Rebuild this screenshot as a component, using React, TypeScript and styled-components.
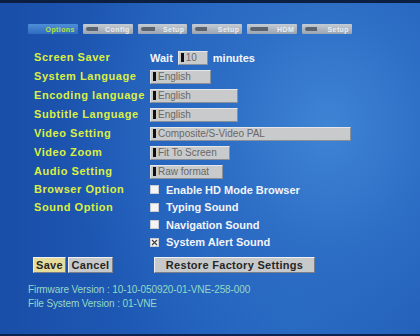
import React from "react";
import styled, { createGlobalStyle } from "styled-components";

const Global = createGlobalStyle`
  html, body {
    margin: 0;
    padding: 0;
    background: #0a1830;
  }
`;

const Screen = styled.div`
  width: 420px;
  height: 336px;
  overflow: hidden;
  display: flex;
  flex-direction: column;
  font-family: "Liberation Sans", Arial, sans-serif;
  background: radial-gradient(
      ellipse 260px 300px at 78% 38%,
      #3e84d4 0%,
      #2c6cc4 45%,
      rgba(30, 90, 180, 0) 100%
    ),
    linear-gradient(90deg, #1a4ea8 0%, #1f5cb8 40%, #2466c0 70%, #1d58b2 100%);
  border-bottom: 2px solid #0c2250;
  box-sizing: border-box;
`;

const TopStrip = styled.div`
  height: 3px;
  background: #0d1f40;
  flex: none;
`;

const TabBar = styled.div`
  margin: 21px 0 0 28px;
  width: 324px;
  height: 10px;
  display: flex;
  gap: 5px;
`;

const Tab = styled.div<{ $active?: boolean }>`
  flex: 1;
  display: flex;
  align-items: center;
  justify-content: flex-end;
  gap: 2px;
  padding: 0 3px;
  font-size: 7px;
  font-weight: bold;
  letter-spacing: 0.4px;
  color: ${(p) => (p.$active ? "#b8e040" : "#e8eef4")};
  background: ${(p) =>
    p.$active
      ? "linear-gradient(180deg, #4f8ed8 0%, #2e6cc0 100%)"
      : "linear-gradient(180deg, #c4ccd4 0%, #9aa4b0 100%)"};
  border-radius: 1px;
  overflow: hidden;
`;

const TabIcon = styled.span<{ $w: number }>`
  width: ${(p) => p.$w}px;
  height: 4px;
  background: #5a6470;
  border-radius: 2px 0 0 2px;
  margin-right: auto;
`;

const Form = styled.div`
  margin: 14px 0 0 34px;
  display: grid;
  grid-template-columns: 116px 1fr;
  align-items: start;
`;

const Label = styled.div<{ $h?: number }>`
  font-size: 11px;
  font-weight: bold;
  letter-spacing: 0.55px;
  color: #dcf040;
  white-space: nowrap;
  line-height: ${(p) => p.$h ?? 19}px;
`;

const Value = styled.div`
  height: 19px;
  display: flex;
  align-items: center;
  gap: 5px;
`;

const WaitText = styled.span`
  font-size: 11px;
  font-weight: bold;
  color: #f4f6fa;
`;

const Field = styled.div<{ $w: number }>`
  width: ${(p) => p.$w}px;
  height: 14px;
  box-sizing: border-box;
  display: flex;
  align-items: center;
  gap: 2px;
  padding-left: 2px;
  background: #c9cacb;
  border-top: 1px solid #e4e6e8;
  border-left: 1px solid #e0e2e4;
  border-bottom: 1px solid #8a9098;
  border-right: 1px solid #8a9098;
  font-size: 10px;
  color: #686868;
  white-space: nowrap;
  overflow: hidden;
`;

const Cursor = styled.span`
  width: 3px;
  height: 9px;
  background: #101010;
  flex: none;
`;

const Checks = styled.div`
  display: flex;
  flex-direction: column;
`;

const CheckRow = styled.div`
  height: 17.5px;
  display: flex;
  align-items: center;
  gap: 7px;
  font-size: 11px;
  font-weight: bold;
  color: #f2f4f8;
  white-space: nowrap;
`;

const Box = styled.span`
  width: 9px;
  height: 9px;
  box-sizing: border-box;
  background: #f4f4f4;
  border: 1px solid #c8ccd4;
  display: flex;
  align-items: center;
  justify-content: center;
  flex: none;
`;

const Buttons = styled.div`
  margin: 6px 0 0 33px;
  display: flex;
  align-items: center;
  height: 16px;
`;

const Button = styled.div<{ $w: number; $bg: string; $ml?: number }>`
  width: ${(p) => p.$w}px;
  height: 16px;
  margin-left: ${(p) => p.$ml ?? 0}px;
  box-sizing: border-box;
  display: flex;
  align-items: center;
  justify-content: center;
  background: ${(p) => p.$bg};
  border-top: 1px solid #eef0f2;
  border-left: 1px solid #eef0f2;
  border-bottom: 1px solid #7a8088;
  border-right: 1px solid #7a8088;
  font-size: 11px;
  font-weight: bold;
  letter-spacing: 0.3px;
  color: #262626;
`;

const Info = styled.div`
  margin: 11px 0 0 28px;
  display: flex;
  flex-direction: column;
  gap: 3px;
  font-size: 10px;
  line-height: 11px;
  color: #94d8c4;
  letter-spacing: -0.1px;
`;

const tabs = [
  { name: "Options", icon: 0, active: true },
  { name: "Config", icon: 12 },
  { name: "Setup", icon: 14 },
  { name: "Setup", icon: 12 },
  { name: "HDM", icon: 18 },
  { name: "Setup", icon: 12 },
];

function Check({ checked, children }: { checked?: boolean; children: React.ReactNode }) {
  return (
    <CheckRow>
      <Box>
        {checked && (
          <svg width="7" height="7" viewBox="0 0 7 7">
            <path d="M1 1L6 6M6 1L1 6" stroke="#404040" strokeWidth="1.2" />
          </svg>
        )}
      </Box>
      {children}
    </CheckRow>
  );
}

function App() {
  return (
    <Screen>
      <Global />
      <TopStrip />
      <TabBar>
        {tabs.map((t, i) => (
          <Tab key={i} $active={t.active}>
            {t.icon > 0 && <TabIcon $w={t.icon} />}
            {t.name}
          </Tab>
        ))}
      </TabBar>
      <Form>
        <Label>Screen Saver</Label>
        <Value>
          <WaitText>Wait</WaitText>
          <Field $w={30}>
            <Cursor />
            10
          </Field>
          <WaitText>minutes</WaitText>
        </Value>
        <Label>System Language</Label>
        <Value>
          <Field $w={61}>
            <Cursor />
            English
          </Field>
        </Value>
        <Label>Encoding language</Label>
        <Value>
          <Field $w={88}>
            <Cursor />
            English
          </Field>
        </Value>
        <Label>Subtitle Language</Label>
        <Value>
          <Field $w={88}>
            <Cursor />
            English
          </Field>
        </Value>
        <Label>Video Setting</Label>
        <Value>
          <Field $w={201}>
            <Cursor />
            Composite/S-Video PAL
          </Field>
        </Value>
        <Label>Video Zoom</Label>
        <Value>
          <Field $w={80}>
            <Cursor />
            Fit To Screen
          </Field>
        </Value>
        <Label>Audio Setting</Label>
        <Value>
          <Field $w={73}>
            <Cursor />
            Raw format
          </Field>
        </Value>
        <Label $h={17.5}>Browser Option</Label>
        <Checks>
          <Check>Enable HD Mode Browser</Check>
        </Checks>
        <Label $h={17.5}>Sound Option</Label>
        <Checks>
          <Check>Typing Sound</Check>
          <Check>Navigation Sound</Check>
          <Check checked>System Alert Sound</Check>
        </Checks>
      </Form>
      <Buttons>
        <Button $w={33} $bg="#e6dc9c">
          Save
        </Button>
        <Button $w={45} $bg="#c8c9ca" $ml={2}>
          Cancel
        </Button>
        <Button $w={161} $bg="#c8c9ca" $ml={41}>
          Restore Factory Settings
        </Button>
      </Buttons>
      <Info>
        <span>Firmware Version : 10-10-050920-01-VNE-258-000</span>
        <span>File System Version : 01-VNE</span>
      </Info>
    </Screen>
  );
}

export default App;
